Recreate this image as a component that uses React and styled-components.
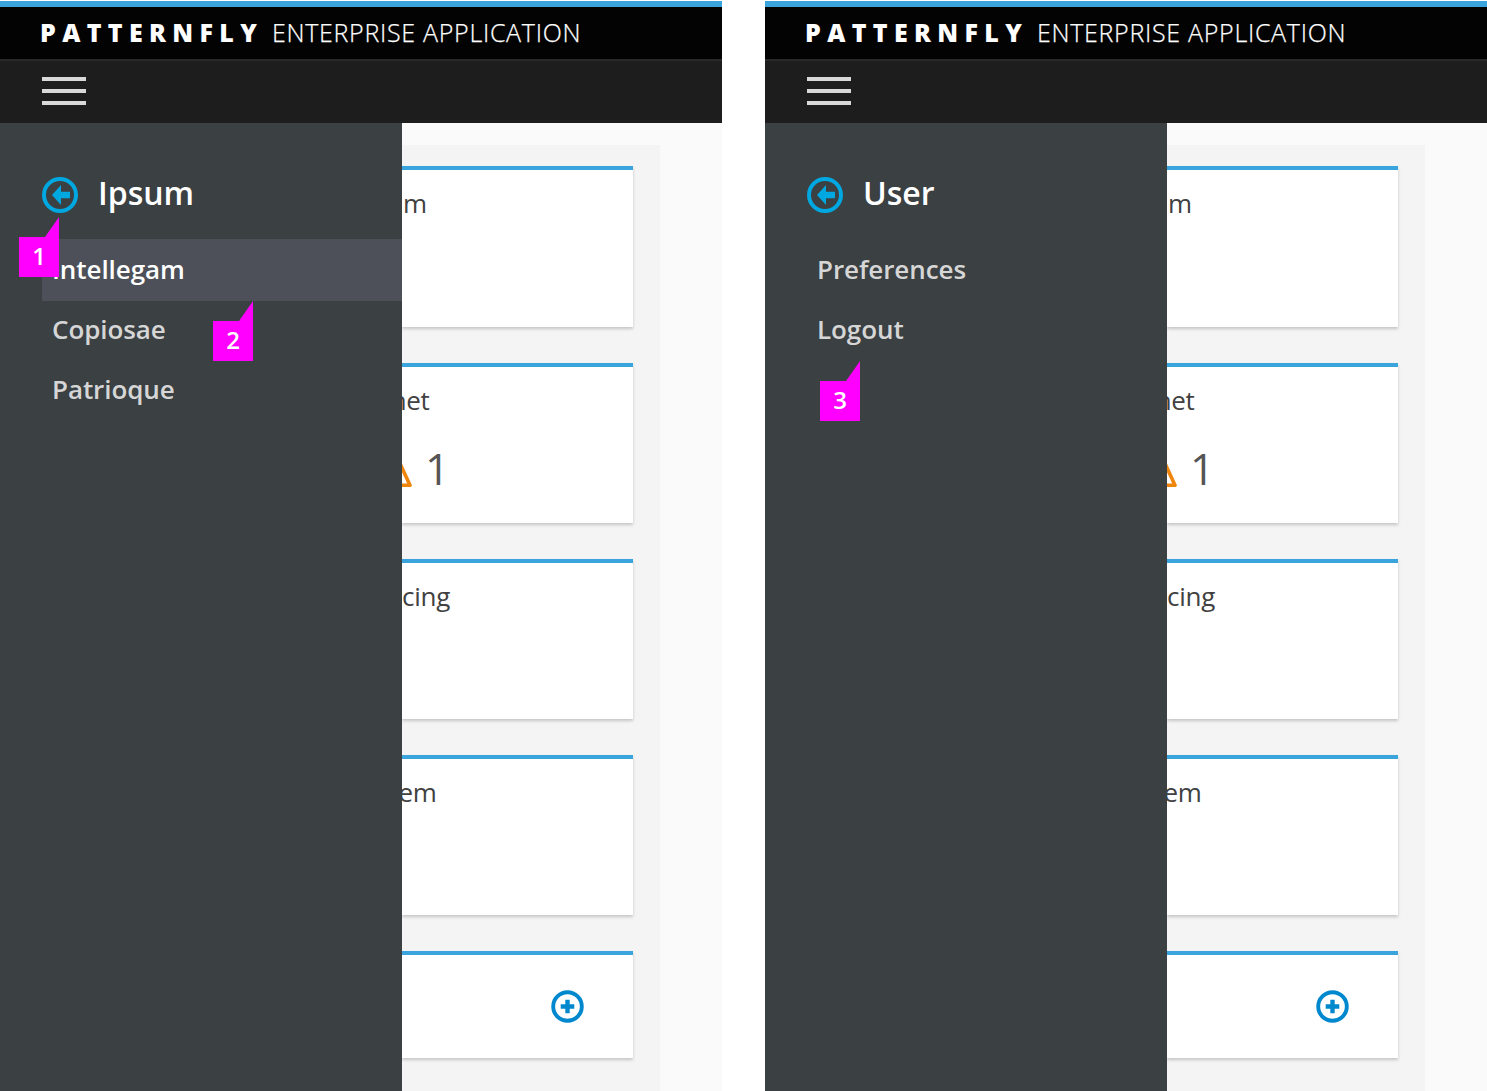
import React from "react";
import styled, { createGlobalStyle, css } from "styled-components";

const GlobalStyle = createGlobalStyle`
  * { box-sizing: border-box; }
  body { margin: 0; background: #fff; overflow: hidden; font-family: "Open Sans", "Noto Sans", sans-serif; }
`;

const Page = styled.main`
  display: flex;
  gap: 43px;
  width: 1487px;
  height: 1091px;
  padding-top: 1px;
  overflow: hidden;
`;

const Screen = styled.section`
  position: relative;
  display: flex;
  flex-direction: column;
  width: 722px;
  height: 1090px;
`;

const BrandBar = styled.header`
  display: flex;
  align-items: flex-start;
  flex: none;
  height: 58px;
  padding: 0 41px 0 40px;
  border-top: 6px solid #39a5dc;
  background: #030303;
  color: #fff;
  font-size: 25px;
  line-height: 50px;
  white-space: nowrap;
`;

const BrandName = styled.span`
  width: 232px;
  font-weight: 800;
  letter-spacing: 6.35px;
`;

const BrandSuffix = styled.span`
  font-weight: 300;
  letter-spacing: 0.7px;
  -webkit-text-stroke: 0.25px #fff;
`;

const NavBar = styled.nav`
  display: flex;
  align-items: center;
  flex: none;
  height: 64px;
  padding: 0 42px;
  border-top: 2px solid #292929;
  background: #1d1d1d;
`;

const MenuButton = styled.button`
  display: flex;
  flex-direction: column;
  gap: 8px;
  width: 44px;
  margin: 0 0 2px;
  padding: 0;
  border: 0;
  background: none;
`;

const MenuLine = styled.span`
  height: 4px;
  background: #d9d9d9;
`;

const Body = styled.div`
  display: flex;
  flex: 1;
  min-height: 0;
`;

const Drawer = styled.aside`
  flex: none;
  width: 402px;
  padding: 40px 0 0 42px;
  background: #3b4043;
`;

const DrawerHeader = styled.div`
  display: flex;
  align-items: center;
  gap: 20px;
  height: 64px;
  margin-bottom: 12px;
`;

const DrawerTitle = styled.h2`
  margin: -4px 0 0;
  color: #fff;
  font-size: 32px;
  font-weight: 600;
  line-height: 44px;
`;

const BackIcon = styled.svg`
  display: block;
  width: 36px;
  height: 36px;
`;

const MenuItem = styled.div`
  height: 60px;
  padding-left: 10px;
  color: #d6d6d6;
  font-size: 26px;
  font-weight: 600;
  letter-spacing: -0.08px;
  line-height: 60px;
  ${(p) =>
    p.$active &&
    css`
      height: 62px;
      margin-bottom: -2px;
      background: #4d5058;
      color: #fff;
    `}
`;

const Content = styled.div`
  flex: 1;
  padding-top: 22px;
  overflow: hidden;
  background: #fafafa;
`;

const Dashboard = styled.div`
  display: flex;
  flex-direction: column;
  gap: 36px;
  width: 258px;
  height: 100%;
  padding: 21.4px 27px 0 0;
  background: #f4f4f4;
`;

const Card = styled.article`
  flex: none;
  height: ${(p) => p.$height || 160.2}px;
  border-top: 4px solid #39a5dc;
  background: #fff;
  box-shadow: 0 2px 3px rgba(0, 0, 0, 0.19);
`;

const CardTitle = styled.h3`
  display: flex;
  justify-content: flex-end;
  width: ${(p) => p.$end}px;
  margin: 0;
  padding-top: 13px;
  color: #414141;
  font-size: 26px;
  font-weight: 400;
  letter-spacing: -0.3px;
  line-height: 40px;
`;

const Status = styled.div`
  display: flex;
  align-items: center;
  gap: 12px;
  margin: 19px 0 0 -25px;
  color: #555;
  font-size: 43px;
  line-height: 60px;
`;

const WarningIcon = styled.svg`
  flex: none;
  width: 36px;
  height: 38px;
  margin-top: 1px;
`;

const AddRow = styled.div`
  display: flex;
  align-items: center;
  justify-content: flex-end;
  height: 102px;
  padding-right: 49px;
`;

const Marker = styled.div`
  position: absolute;
  left: ${(p) => p.$x}px;
  top: ${(p) => p.$y}px;
  width: 40px;
  height: 60px;
  padding-top: 20px;
  background: #f0f;
  clip-path: polygon(0 20px, 26px 20px, 40px 0, 40px 60px, 0 60px);
  color: #fff;
  font-size: 24px;
  font-weight: 600;
  line-height: 37px;
  text-align: center;
`;

const cards = [
  { title: "m", end: 24.7 },
  { title: "met", end: 27.5, warnings: 1 },
  { title: "cing", end: 48 },
  { title: "em", end: 34.5 },
];

function AppScreen({ title, items, active, markers }) {
  return (
    <Screen>
      <BrandBar>
        <BrandName>PATTERNFLY</BrandName>
        <BrandSuffix>ENTERPRISE APPLICATION</BrandSuffix>
      </BrandBar>
      <NavBar>
        <MenuButton aria-label="Menu">
          <MenuLine />
          <MenuLine />
          <MenuLine />
        </MenuButton>
      </NavBar>
      <Body>
        <Drawer>
          <DrawerHeader>
            <BackIcon viewBox="0 0 36 36">
              <circle cx="18" cy="18" r="16" fill="none" stroke="#00a8e1" strokeWidth="4" />
              <path d="M10 18 19 8v6.7h9v6.6h-9V28Z" fill="#00a8e1" />
            </BackIcon>
            <DrawerTitle>{title}</DrawerTitle>
          </DrawerHeader>
          {items.map((item) => (
            <MenuItem key={item} $active={item === active}>
              {item}
            </MenuItem>
          ))}
        </Drawer>
        <Content>
          <Dashboard>
            {cards.map((card) => (
              <Card key={card.title}>
                <CardTitle $end={card.end}>{card.title}</CardTitle>
                {card.warnings && (
                  <Status>
                    <WarningIcon viewBox="0 -6 36 38">
                      <path d="M18-3.5 33 29.3H3Z" fill="none" stroke="#f0850c" strokeWidth="3.6" strokeLinejoin="round" />
                    </WarningIcon>
                    <span>{card.warnings}</span>
                  </Status>
                )}
              </Card>
            ))}
            <Card $height={106.5}>
              <AddRow>
                <svg width="33" height="33" viewBox="0 0 33 33">
                  <circle cx="16.5" cy="16.5" r="14.3" fill="none" stroke="#0088ce" strokeWidth="3.9" />
                  <path d="M16.5 9.7v13.6M9.7 16.5h13.6" stroke="#0088ce" strokeWidth="4.4" />
                </svg>
              </AddRow>
            </Card>
          </Dashboard>
        </Content>
      </Body>
      {markers.map((m) => (
        <Marker key={m.label} $x={m.x} $y={m.y}>
          {m.label}
        </Marker>
      ))}
    </Screen>
  );
}

export default function App() {
  return (
    <>
      <GlobalStyle />
      <Page>
        <AppScreen
          title="Ipsum"
          items={["Intellegam", "Copiosae", "Patrioque"]}
          active="Intellegam"
          markers={[
            { label: "1", x: 19, y: 216 },
            { label: "2", x: 213, y: 300 },
          ]}
        />
        <AppScreen
          title="User"
          items={["Preferences", "Logout"]}
          markers={[{ label: "3", x: 55, y: 360 }]}
        />
      </Page>
    </>
  );
}
